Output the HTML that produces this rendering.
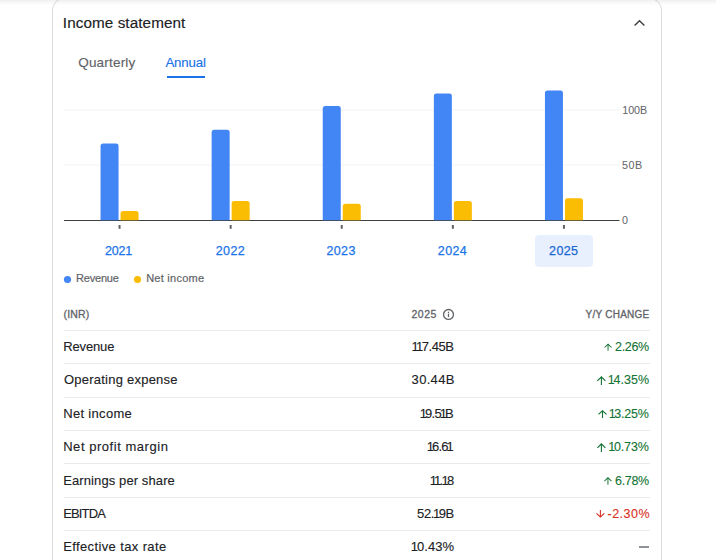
<!DOCTYPE html>
<html><head><meta charset="utf-8">
<style>
html,body{margin:0;padding:0;background:#fff;width:716px;height:560px;overflow:hidden;position:relative}
.o{margin:0 -1.15px}
.t{position:absolute;white-space:nowrap;font-family:"Liberation Sans",sans-serif}
.card{position:absolute;left:52px;top:-2px;width:610px;height:640px;box-sizing:border-box;border:1px solid #dadce0;border-radius:12px}
.shadow{position:absolute;left:0;top:0;width:716px;height:5px}
.shadow i{display:block;height:1px;opacity:1}
</style></head><body>
<div class="card"></div>
<svg id="gfx" width="716" height="560" style="position:absolute;left:0;top:0">
<rect x="64" y="109.5" width="555.5" height="1" fill="#f1f3f4"/>
<rect x="64" y="164.5" width="555.5" height="1" fill="#f1f3f4"/>
<rect x="64" y="220" width="555.5" height="1" fill="#3c4043"/>
<path d="M100.55,220.2 V146.00 q0,-2.5 2.5,-2.5 h13 q2.5,0 2.5,2.5 V220.2 Z" fill="#4285f4"/>
<path d="M120.55,220.2 V213.50 q0,-2.5 2.5,-2.5 h13 q2.5,0 2.5,2.5 V220.2 Z" fill="#fbbc04"/>
<rect x="118.55" y="225" width="2" height="3.8" fill="#5f6368"/>
<path d="M211.65,220.2 V132.30 q0,-2.5 2.5,-2.5 h13 q2.5,0 2.5,2.5 V220.2 Z" fill="#4285f4"/>
<path d="M231.65,220.2 V203.50 q0,-2.5 2.5,-2.5 h13 q2.5,0 2.5,2.5 V220.2 Z" fill="#fbbc04"/>
<rect x="229.65" y="225" width="2" height="3.8" fill="#5f6368"/>
<path d="M322.75,220.2 V108.40 q0,-2.5 2.5,-2.5 h13 q2.5,0 2.5,2.5 V220.2 Z" fill="#4285f4"/>
<path d="M342.75,220.2 V206.20 q0,-2.5 2.5,-2.5 h13 q2.5,0 2.5,2.5 V220.2 Z" fill="#fbbc04"/>
<rect x="340.75" y="225" width="2" height="3.8" fill="#5f6368"/>
<path d="M433.85,220.2 V95.90 q0,-2.5 2.5,-2.5 h13 q2.5,0 2.5,2.5 V220.2 Z" fill="#4285f4"/>
<path d="M453.85,220.2 V203.50 q0,-2.5 2.5,-2.5 h13 q2.5,0 2.5,2.5 V220.2 Z" fill="#fbbc04"/>
<rect x="451.85" y="225" width="2" height="3.8" fill="#5f6368"/>
<path d="M544.95,220.2 V92.90 q0,-2.5 2.5,-2.5 h13 q2.5,0 2.5,2.5 V220.2 Z" fill="#4285f4"/>
<path d="M564.95,220.2 V200.80 q0,-2.5 2.5,-2.5 h13 q2.5,0 2.5,2.5 V220.2 Z" fill="#fbbc04"/>
<rect x="562.95" y="225" width="2" height="3.8" fill="#5f6368"/>
<rect x="167" y="76" width="38" height="2" fill="#1a73e8"/>
<rect x="535" y="235" width="58" height="32" rx="4" fill="#e8f0fe"/>
<circle cx="67.5" cy="279.5" r="3.6" fill="#4285f4"/>
<circle cx="137.5" cy="279.5" r="3.6" fill="#fbbc04"/>
<path d="M634.6,25.6 L639.5,20.7 L644.4,25.6" fill="none" stroke="#3c4043" stroke-width="1.4"/>
<rect x="64" y="330" width="586" height="1" fill="#e8eaed"/>
<rect x="64" y="363" width="586" height="1" fill="#e8eaed"/>
<rect x="64" y="397" width="586" height="1" fill="#e8eaed"/>
<rect x="64" y="430" width="586" height="1" fill="#e8eaed"/>
<rect x="64" y="463" width="586" height="1" fill="#e8eaed"/>
<rect x="64" y="497" width="586" height="1" fill="#e8eaed"/>
<rect x="64" y="530" width="586" height="1" fill="#e8eaed"/>
<circle cx="448.5" cy="314.45" r="4.95" fill="none" stroke="#5f6368" stroke-width="1.3"/>
<rect x="447.85" y="313.6" width="1.25" height="3.5" fill="#5f6368"/>
<rect x="447.85" y="311.7" width="1.25" height="1.25" fill="#5f6368"/>
<rect x="639" y="546.3" width="10" height="1.4" fill="#5f6368"/>
<path transform="matrix(0.4812 0 0 0.4437 602.275 341.825)" d="M4 12l1.41 1.41L11 7.83V20h2V7.83l5.58 5.59L20 12l-8-8-8 8z" fill="#137333"/>
<path transform="matrix(0.5500 0 0 0.5500 594.800 373.900)" d="M4 12l1.41 1.41L11 7.83V20h2V7.83l5.58 5.59L20 12l-8-8-8 8z" fill="#137333"/>
<path transform="matrix(0.5500 0 0 0.4937 595.900 408.125)" d="M4 12l1.41 1.41L11 7.83V20h2V7.83l5.58 5.59L20 12l-8-8-8 8z" fill="#137333"/>
<path transform="matrix(0.5500 0 0 0.5500 594.800 440.900)" d="M4 12l1.41 1.41L11 7.83V20h2V7.83l5.58 5.59L20 12l-8-8-8 8z" fill="#137333"/>
<path transform="matrix(0.4812 0 0 0.4875 602.175 474.950)" d="M4 12l1.41 1.41L11 7.83V20h2V7.83l5.58 5.59L20 12l-8-8-8 8z" fill="#137333"/>
<path transform="matrix(0.5375 0 0 0.4875 593.950 507.950)" d="M20 12l-1.41-1.41L13 16.17V4h-2v12.17l-5.58-5.59L4 12l8 8 8-8z" fill="#d93025"/>
</svg>
<div class="t" id="title" style="left:62.82px;top:15.19px;font-size:15.25px;line-height:15.25px;color:#202124;letter-spacing:0.085px;-webkit-text-stroke:0.15px currentColor;">Income statement</div>
<div class="t" id="quarterly" style="left:78.20px;top:56.07px;font-size:13.5px;line-height:13.5px;color:#5f6368;letter-spacing:0.200px;-webkit-text-stroke:0.15px currentColor;">Quarterly</div>
<div class="t" id="annual" style="left:165.42px;top:55.58px;font-size:13.25px;line-height:13.25px;color:#1a73e8;letter-spacing:-0.128px;-webkit-text-stroke:0.15px currentColor;">Annual</div>
<div class="t" id="y2021" style="left:105.12px;top:245.42px;font-size:12.5px;line-height:12.5px;color:#1a73e8;letter-spacing:-0.267px;-webkit-text-stroke:0.25px currentColor;">2021</div>
<div class="t" id="y2022" style="left:215.79px;top:245.42px;font-size:12.5px;line-height:12.5px;color:#1a73e8;letter-spacing:0.373px;-webkit-text-stroke:0.25px currentColor;">2022</div>
<div class="t" id="y2023" style="left:326.41px;top:245.42px;font-size:12.5px;line-height:12.5px;color:#1a73e8;letter-spacing:0.373px;-webkit-text-stroke:0.25px currentColor;">2023</div>
<div class="t" id="y2024" style="left:437.83px;top:245.42px;font-size:12.5px;line-height:12.5px;color:#1a73e8;letter-spacing:0.373px;-webkit-text-stroke:0.25px currentColor;">2024</div>
<div class="t" id="y2025" style="left:549.08px;top:245.42px;font-size:12.5px;line-height:12.5px;color:#1967d2;letter-spacing:0.373px;-webkit-text-stroke:0.25px currentColor;">2025</div>
<div class="t" id="l100" style="left:622.16px;top:104.80px;font-size:10.75px;line-height:10.75px;color:#5f6368;">100B</div>
<div class="t" id="l50" style="left:622.08px;top:159.90px;font-size:10.75px;line-height:10.75px;color:#5f6368;letter-spacing:0.480px;">50B</div>
<div class="t" id="l0" style="left:622.08px;top:214.80px;font-size:10.75px;line-height:10.75px;color:#5f6368;">0</div>
<div class="t" id="legrev" style="left:76.08px;top:273.09px;font-size:11px;line-height:11px;color:#5f6368;letter-spacing:-0.213px;-webkit-text-stroke:0.2px currentColor;">Revenue</div>
<div class="t" id="legnet" style="left:146.16px;top:273.09px;font-size:11px;line-height:11px;color:#5f6368;letter-spacing:0.249px;-webkit-text-stroke:0.2px currentColor;">Net income</div>
<div class="t" id="inr" style="left:63.54px;top:309.01px;font-size:10.5px;line-height:10.5px;color:#5f6368;letter-spacing:0.160px;-webkit-text-stroke:0.3px currentColor;">(INR)</div>
<div class="t" id="h2025" style="left:411.50px;top:309.11px;font-size:10.5px;line-height:10.5px;color:#5f6368;letter-spacing:0.533px;-webkit-text-stroke:0.3px currentColor;">2025</div>
<div class="t" id="yy" style="left:585.54px;top:310.14px;font-size:10px;line-height:10px;color:#5f6368;letter-spacing:0.249px;-webkit-text-stroke:0.3px currentColor;">Y/Y CHANGE</div>
<div class="t" id="lab0" style="left:63.20px;top:340.00px;font-size:13px;line-height:13px;color:#202124;letter-spacing:-0.133px;-webkit-text-stroke:0.12px currentColor;">Revenue</div>
<div class="t" id="val0" style="left:412.60px;top:340.00px;font-size:13px;line-height:13px;color:#202124;letter-spacing:-0.407px;-webkit-text-stroke:0.12px currentColor;"><span class="o">1</span><span class="o">1</span>7.45B</div>
<div class="t" id="chg0" style="left:615.00px;top:341.02px;font-size:12.5px;line-height:12.5px;color:#137333;letter-spacing:-0.320px;-webkit-text-stroke:0.1px currentColor;">2.26%</div>
<div class="t" id="lab1" style="left:64.00px;top:373.00px;font-size:13px;line-height:13px;color:#202124;letter-spacing:0.230px;-webkit-text-stroke:0.12px currentColor;">Operating expense</div>
<div class="t" id="val1" style="left:411.58px;top:373.00px;font-size:13px;line-height:13px;color:#202124;letter-spacing:0.320px;-webkit-text-stroke:0.12px currentColor;">30.44B</div>
<div class="t" id="chg1" style="left:608.92px;top:374.02px;font-size:12.5px;line-height:12.5px;color:#137333;letter-spacing:0.000px;-webkit-text-stroke:0.1px currentColor;"><span class="o">1</span>4.35%</div>
<div class="t" id="lab2" style="left:63.20px;top:407.00px;font-size:13px;line-height:13px;color:#202124;letter-spacing:0.320px;-webkit-text-stroke:0.12px currentColor;">Net income</div>
<div class="t" id="val2" style="left:420.80px;top:407.00px;font-size:13px;line-height:13px;color:#202124;letter-spacing:-0.740px;-webkit-text-stroke:0.12px currentColor;"><span class="o">1</span>9.5<span class="o">1</span>B</div>
<div class="t" id="chg2" style="left:609.84px;top:408.02px;font-size:12.5px;line-height:12.5px;color:#137333;letter-spacing:-0.224px;-webkit-text-stroke:0.1px currentColor;"><span class="o">1</span>3.25%</div>
<div class="t" id="lab3" style="left:63.20px;top:440.00px;font-size:13px;line-height:13px;color:#202124;letter-spacing:0.540px;-webkit-text-stroke:0.12px currentColor;">Net profit margin</div>
<div class="t" id="val3" style="left:427.82px;top:440.00px;font-size:13px;line-height:13px;color:#202124;letter-spacing:-0.780px;-webkit-text-stroke:0.12px currentColor;"><span class="o">1</span>6.6<span class="o">1</span></div>
<div class="t" id="chg3" style="left:609.30px;top:441.02px;font-size:12.5px;line-height:12.5px;color:#137333;letter-spacing:-0.096px;-webkit-text-stroke:0.1px currentColor;"><span class="o">1</span>0.73%</div>
<div class="t" id="lab4" style="left:63.20px;top:474.00px;font-size:13px;line-height:13px;color:#202124;letter-spacing:0.104px;-webkit-text-stroke:0.12px currentColor;">Earnings per share</div>
<div class="t" id="val4" style="left:430.90px;top:474.00px;font-size:13px;line-height:13px;color:#202124;letter-spacing:-0.620px;-webkit-text-stroke:0.12px currentColor;"><span class="o">1</span><span class="o">1</span>.<span class="o">1</span>8</div>
<div class="t" id="chg4" style="left:615.00px;top:475.02px;font-size:12.5px;line-height:12.5px;color:#137333;letter-spacing:-0.320px;-webkit-text-stroke:0.1px currentColor;">6.78%</div>
<div class="t" id="lab5" style="left:63.20px;top:507.00px;font-size:13px;line-height:13px;color:#202124;letter-spacing:-0.864px;-webkit-text-stroke:0.12px currentColor;">EBITDA</div>
<div class="t" id="val5" style="left:417.04px;top:507.00px;font-size:13px;line-height:13px;color:#202124;letter-spacing:-0.352px;-webkit-text-stroke:0.12px currentColor;">52.<span class="o">1</span>9B</div>
<div class="t" id="chg5" style="left:607.46px;top:508.02px;font-size:12.5px;line-height:12.5px;color:#d93025;letter-spacing:0.512px;-webkit-text-stroke:0.1px currentColor;">-2.30%</div>
<div class="t" id="lab6" style="left:63.20px;top:540.00px;font-size:13px;line-height:13px;color:#202124;letter-spacing:0.376px;-webkit-text-stroke:0.12px currentColor;">Effective tax rate</div>
<div class="t" id="val6" style="left:411.96px;top:540.00px;font-size:13px;line-height:13px;color:#202124;letter-spacing:0.064px;-webkit-text-stroke:0.12px currentColor;"><span class="o">1</span>0.43%</div>

<div class="shadow"><i style="background:rgba(0,0,0,.055)"></i><i style="background:rgba(0,0,0,.039)"></i><i style="background:rgba(0,0,0,.027)"></i><i style="background:rgba(0,0,0,.02)"></i><i style="background:rgba(0,0,0,.008)"></i></div>
</body></html>
